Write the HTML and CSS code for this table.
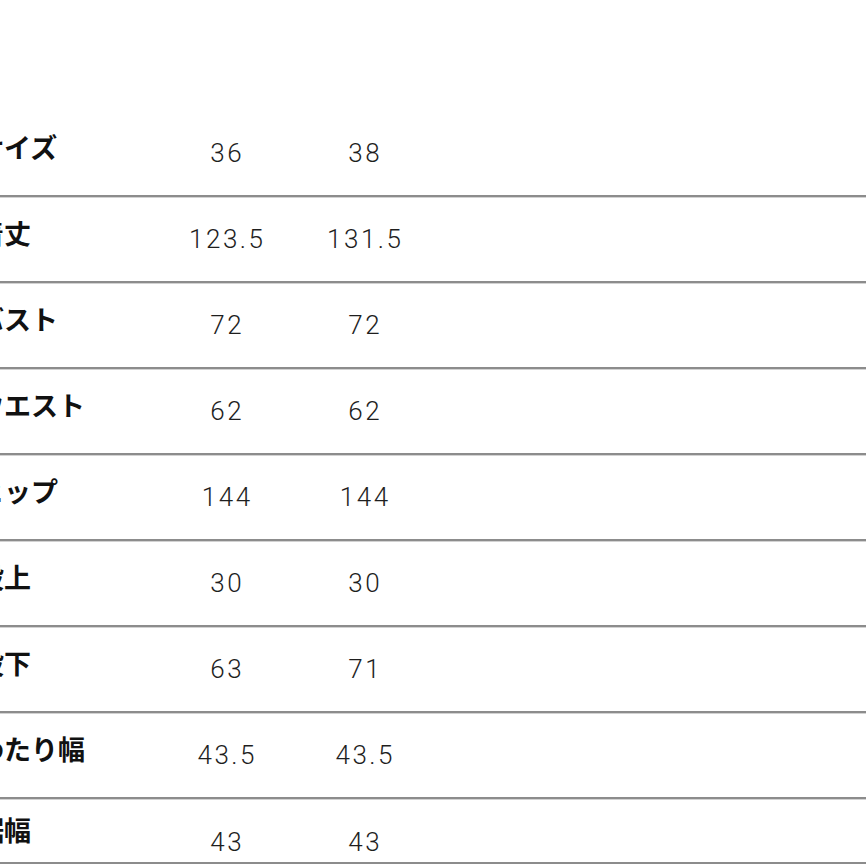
FILE: index.html
```html
<!DOCTYPE html>
<html lang="ja">
<head>
<meta charset="utf-8">
<link rel="stylesheet" href="styles.css">
</head>
<body>
<div class="sheet">
  <div class="row"><span class="label">サイズ</span><span class="num">36</span><span class="num">38</span></div>
  <div class="row"><span class="label">着丈</span><span class="num">123.5</span><span class="num">131.5</span></div>
  <div class="row"><span class="label">バスト</span><span class="num">72</span><span class="num">72</span></div>
  <div class="row"><span class="label">ウエスト</span><span class="num">62</span><span class="num">62</span></div>
  <div class="row"><span class="label">ヒップ</span><span class="num">144</span><span class="num">144</span></div>
  <div class="row"><span class="label">股上</span><span class="num">30</span><span class="num">30</span></div>
  <div class="row"><span class="label">股下</span><span class="num">63</span><span class="num">71</span></div>
  <div class="row"><span class="label">わたり幅</span><span class="num">43.5</span><span class="num">43.5</span></div>
  <div class="row last"><span class="label">裾幅</span><span class="num">43</span><span class="num">43</span></div>
</div>
</body>
</html>
```

FILE: styles.css
```css
html, body {
  margin: 0;
  padding: 0;
  background: #ffffff;
  overflow: hidden;
}
.sheet {
  padding-top: 111px;
  width: 866px;
}
.row {
  display: flex;
  align-items: center;
  height: 84px;
  border-bottom: 2px solid #8c8c8c;
  box-shadow: 0 1px 0 #d2d2d2;
}
.row.last {
  height: 63px;
  align-items: flex-start;
}
.label {
  width: 157px;
  flex: none;
  text-indent: -23px;
  white-space: nowrap;
  font-family: "Noto Sans CJK JP", sans-serif;
  font-weight: 700;
  font-size: 27px;
  line-height: 30px;
  color: #111111;
  padding-bottom: 12px;
}
.num {
  width: 138px;
  flex: none;
  text-align: center;
  font-family: Roboto, "Liberation Sans", sans-serif;
  font-weight: 300;
  font-size: 26px;
  line-height: 30px;
  letter-spacing: 2.5px;
  text-indent: 2.5px;
  color: #1e1e1e;
}
.row.last .label {
  margin-top: 16px;
  padding-bottom: 0;
}
.row.last .num {
  margin-top: 28px;
}
```
